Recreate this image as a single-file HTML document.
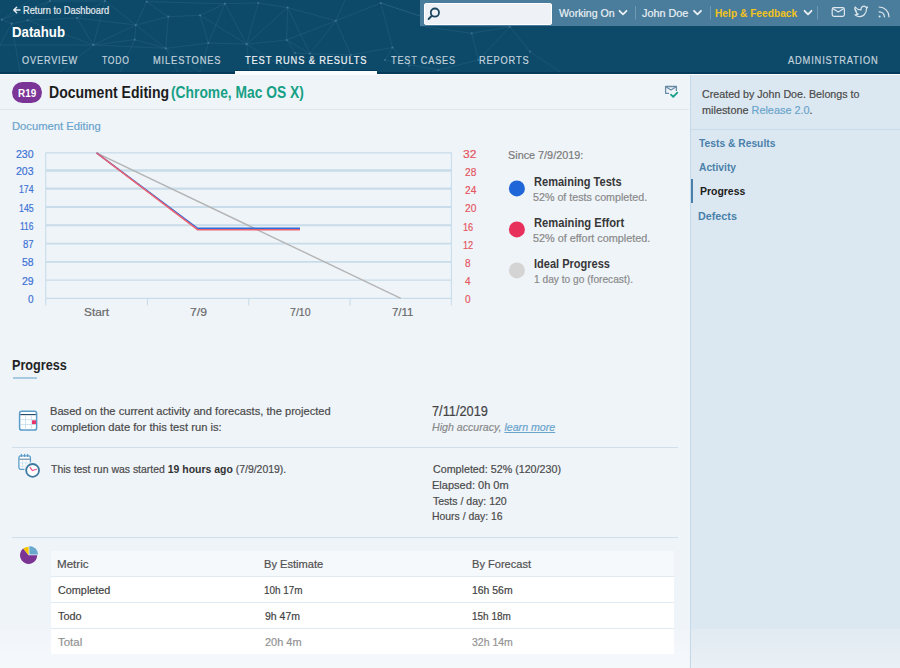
<!DOCTYPE html>
<html><head><meta charset="utf-8">
<style>
html,body{margin:0;padding:0;}
body{width:900px;height:668px;overflow:hidden;position:relative;background:#eff4f9;font-family:"Liberation Sans",sans-serif;}
.t{position:absolute;white-space:nowrap;line-height:1;}
.r{-webkit-text-stroke:0.2px currentColor;}
.abs{position:absolute;}
</style></head><body>
<!-- header -->
<div class="abs" style="left:0;top:0;width:900px;height:72px;background:#0d4a69;"></div>
<svg class="abs" style="left:0;top:0" width="900" height="72" viewBox="0 0 900 72">
 <path d="M1.7 19.7L50 1M1.7 19.7L11.7 23.7M11.7 23.7L27.5 20.3M27.5 20.3L77 18M77 18L105 1M77 18L93.3 45M105 1L93.3 45M93.3 45L135.8 25M105 1L135.8 25M135.8 25L146.7 1.7M93.3 45L134.7 39.7M135.8 25L134.7 39.7M134.7 39.7L165.8 48.3M146.7 1.7L168.3 16.7M168.3 16.7L200 15.3M200 15.3L225 3.7M168.3 16.7L165.8 48.3M200 15.3L208.3 43M225 3.7L208.3 43M225 3.7L246.7 44.2M258.3 3L246.7 44.2M246.7 44.2L287.5 7.5M246.7 44.2L286.7 40M165.8 48.3L208.3 43M208.3 43L246.7 44.2M200 15.3L246.7 44.2M287.5 7.5L335.8 20.8M335.8 20.8L380.8 3M335.8 20.8L286.7 40M335.8 20.8L310 53.7M335.8 20.8L350.8 55M380.8 3L392.5 47.5M392.5 47.5L409 65.8M392.5 47.5L350.8 55M385 60L392.5 47.5M286.7 40L295 53M287.5 7.5L286.7 40M287.5 7.5L310 53.7M471.7 33.3L510 26.7M510 26.7L530 51.7M510 26.7L478.3 60M471.7 33.3L478.3 60M438.3 70L478.3 60M420 26L471.7 33.3M450 26L510 26.7M0 45L11.7 23.7M0 45L93.3 45M93.3 45L60 72M134.7 39.7L120 72M165.8 48.3L200 72M350.8 55L340 72M385 60L438.3 70M530 51.7L560 72M11.7 23.7L20 72M27.5 20.3L93.3 45M50 1L105 1M146.7 1.7L225 3.7M258.3 3L287.5 7.5M380.8 3L450 26M310 53.7L350.8 55M135.8 25L168.3 16.7M135.8 25L165.8 48.3M165.8 48.3L178 72M246.7 44.2L290 72M225 3.7L258.3 3M345 0L335.8 20.8M380.8 3L420 16M295 53L310 53.7M286.7 40L310 53.7M246.7 44.2L250 72M208.3 43L200 72M1.7 19.7L30 0M27.5 20.3L50 1M77 18L135.8 25M93.3 45L165.8 48.3" stroke="#6a9cbb" stroke-opacity="0.2" stroke-width="0.7" fill="none"/>
 <g fill="#7aa6c2" fill-opacity="0.35"><circle cx="1.7" cy="19.7" r="1.1"/><circle cx="11.7" cy="23.7" r="1.1"/><circle cx="27.5" cy="20.3" r="1.1"/><circle cx="50" cy="1" r="1.1"/><circle cx="77" cy="18" r="1.1"/><circle cx="105" cy="1" r="1.1"/><circle cx="93.3" cy="45" r="1.1"/><circle cx="135.8" cy="25" r="1.1"/><circle cx="134.7" cy="39.7" r="1.1"/><circle cx="146.7" cy="1.7" r="1.1"/><circle cx="168.3" cy="16.7" r="1.1"/><circle cx="200" cy="15.3" r="1.1"/><circle cx="225" cy="3.7" r="1.1"/><circle cx="258.3" cy="3" r="1.1"/><circle cx="287.5" cy="7.5" r="1.1"/><circle cx="165.8" cy="48.3" r="1.1"/><circle cx="208.3" cy="43" r="1.1"/><circle cx="246.7" cy="44.2" r="1.1"/><circle cx="286.7" cy="40" r="1.1"/><circle cx="335.8" cy="20.8" r="1.1"/><circle cx="380.8" cy="3" r="1.1"/><circle cx="295" cy="53" r="1.1"/><circle cx="310" cy="53.7" r="1.1"/><circle cx="392.5" cy="47.5" r="1.1"/><circle cx="385" cy="60" r="1.1"/><circle cx="409" cy="65.8" r="1.1"/><circle cx="350.8" cy="55" r="1.1"/><circle cx="471.7" cy="33.3" r="1.1"/><circle cx="510" cy="26.7" r="1.1"/><circle cx="530" cy="51.7" r="1.1"/><circle cx="478.3" cy="60" r="1.1"/><circle cx="438.3" cy="70" r="1.1"/></g>
</svg>
<div class="abs" style="left:0;top:72px;width:900px;height:2px;background:#043b5b;"></div>
<div class="abs" style="left:0;top:74px;width:900px;height:1px;background:#fafcfe;"></div>
<div class="abs" style="left:235px;top:70px;width:142px;height:1px;background:#043b5b;"></div>
<div class="abs" style="left:235px;top:71px;width:142px;height:4px;background:#fafcfe;"></div>
<!-- top bar -->
<div class="abs" style="left:420px;top:0;width:480px;height:25.5px;background:#4a7d9c;"></div>
<div class="abs" style="left:423.5px;top:2.7px;width:126px;height:20px;background:#eef2f7;border:1px solid #ffffff;border-radius:2px;"></div>
<svg class="abs" style="left:0;top:0" width="900" height="30" viewBox="0 0 900 30">
 <g fill="none" stroke="#1c4660" stroke-width="1.8" stroke-linecap="round">
  <circle cx="434.9" cy="12.6" r="4.1"/><path d="M431.6 16 L428.6 19"/>
 </g>
 <g fill="none" stroke="#eaf0f4" stroke-width="1.8" stroke-linecap="round" stroke-linejoin="round">
  <path d="M619.5 10.8 L623 14.3 L626.5 10.8"/>
  <path d="M694 10.8 L697.5 14.3 L701 10.8"/>
  <path d="M804.5 10.8 L808 14.3 L811.5 10.8"/>
 </g>
 <g stroke="#6f98b3" stroke-width="1"><path d="M635.5 6 V19.5 M710.5 6 V19.5 M817.5 6 V19.5"/></g>
 <g fill="none" stroke="#dfe8ee" stroke-width="1.2" stroke-linecap="round" stroke-linejoin="round">
  <rect x="832.2" y="7.6" width="12.2" height="8.8" rx="1.8"/>
  <path d="M833.5 9 L838.3 12 L843.1 9"/>
  <path d="M855 14.8 C857 16.8 861.5 17.5 864 15 C866 13 866.6 10.5 866.5 8.6 L867.6 7 L866 7.3 C865 6.3 863.2 6 862 7 C861 7.8 860.8 9 861 10 C858.5 9.8 856.5 8.8 855.2 7 C854.5 8.8 855 10.5 856.5 11.6 L855.8 11.6 C856.2 13 857.2 13.8 858.3 14 C857.3 14.8 856.2 15 855 14.8 Z"/>
  <path d="M879.2 11.8 A5 5 0 0 1 884.4 16.8"/>
  <path d="M879.2 7 A9.8 9.8 0 0 1 889 16.8"/>
 </g>
 <circle cx="879.6" cy="16.4" r="1" fill="#dfe8ee"/>
 <path d="M13.8 10 L20 10 M16.6 7.2 L13.8 10 L16.6 12.8" fill="none" stroke="#e4ebf0" stroke-width="1.5" stroke-linecap="round" stroke-linejoin="round"/>
</svg>

<!-- sidebar -->
<div class="abs" style="left:690px;top:75px;width:210px;height:554px;background:#dce8f1;"></div>
<div class="abs" style="left:690px;top:629px;width:210px;height:39px;background:linear-gradient(#e2ebf2,#e9f0f6);"></div>
<div class="abs" style="left:689.5px;top:75px;width:1.5px;height:593px;background:#c5d9e8;"></div>
<div class="abs" style="left:690px;top:129px;width:210px;height:1px;background:#c9dbe8;"></div>
<div class="abs" style="left:690.5px;top:179px;width:2.5px;height:23.5px;background:#4a80aa;"></div>

<!-- title row -->
<div class="abs" style="left:12px;top:82px;width:30px;height:21px;border-radius:11px;background:#7a3597;"></div>
<div class="abs" style="left:0;top:109px;width:689px;height:1px;background:#dce7f0;"></div>
<svg class="abs" style="left:0;top:0" width="900" height="130" viewBox="0 0 900 130">
 <g fill="none" stroke="#6a8aa6" stroke-width="1.3" stroke-linejoin="round">
  <path d="M669 93.3 H665.6 V86.5 H676.4 V91"/>
  <path d="M665.8 86.8 L671 90 L676.2 86.8"/>
 </g>
 <path d="M671 94.6 L673.2 96.8 L677.3 92.6" fill="none" stroke="#16a085" stroke-width="1.8" stroke-linecap="round" stroke-linejoin="round"/>
</svg>

<!-- chart -->
<svg class="abs" style="left:0;top:0" width="690" height="330" viewBox="0 0 690 330">
 <g stroke="#c8dce9" stroke-width="1.3" fill="none">
  <path d="M46 152.80 H451.4 M46 169.89 H451.4 M46 188.25 H451.4 M46 206.61 H451.4 M46 224.97 H451.4 M46 243.33 H451.4 M46 261.68 H451.4 M46 280.04 H451.4 M46 298.40 H451.4 M46 171.00 H451.4 M46 189.20 H451.4 M46 207.40 H451.4 M46 225.60 H451.4 M46 243.80 H451.4 M46 262.00 H451.4 M46 280.20 H451.4"/>
 </g>
 <g stroke="#c8dce9" stroke-width="1.1" fill="none">
  <path d="M45.7 152.5 V305.5 M451.4 152.5 V305.5 M147.5 298.4 V305.5 M248.8 298.4 V305.5 M350.1 298.4 V305.5"/>
 </g>
 <path d="M96.5 152.8 L400.8 298.4" stroke="#b4b4b4" stroke-width="1.4" fill="none"/>
 <path d="M96.5 152.8 L197.6 228.3 L300 228.3" stroke="#2d6bd6" stroke-width="1.5" fill="none"/>
 <path d="M96.5 152.8 L197.6 229.7 L300 229.7" stroke="#ea6272" stroke-width="1.5" fill="none"/>
 <circle cx="516.9" cy="188.4" r="8" fill="#1f66d9"/>
 <circle cx="516.9" cy="229.4" r="8" fill="#e8305c"/>
 <circle cx="516.9" cy="270.4" r="8" fill="#d4d4d4"/>
</svg>

<!-- progress -->
<div class="abs" style="left:12.5px;top:377px;width:24px;height:2px;background:#a9c9e0;"></div>
<div class="abs" style="left:12px;top:447px;width:666px;height:1px;background:#cfe0ec;"></div>
<div class="abs" style="left:12px;top:537px;width:666px;height:1px;background:#cfe0ec;"></div>
<svg class="abs" style="left:0;top:400px" width="60" height="170" viewBox="0 400 60 170">
 <!-- calendar -->
 <rect x="19.6" y="411.3" width="17" height="18.8" rx="2.2" fill="#ffffff" stroke="#5a9cc8" stroke-width="1.5"/>
 <path d="M20.3 414.6 H35.9" stroke="#1f4560" stroke-width="1.1"/>
 <g stroke="#c4dcec" stroke-width="0.8"><path d="M25.5 415.2 V429.5 M31.3 415.2 V429.5 M20.3 419.6 H35.9 M20.3 424.5 H35.9"/></g>
 <rect x="32" y="420.3" width="4" height="3.8" fill="#e8336a"/>
 <!-- calendar clock -->
 <rect x="18.9" y="455.8" width="11.5" height="13.6" rx="1.8" fill="#ffffff" stroke="#5a9cc8" stroke-width="1.3"/>
 <g stroke="#5a9cc8" stroke-width="1.2" stroke-linecap="round"><path d="M21.4 454.3 V456.5 M24.6 454.3 V456.5 M27.7 454.3 V456.5"/></g>
 <path d="M19.5 459.2 H29.8" stroke="#3f6782" stroke-width="0.9"/>
 <g stroke="#c4dcec" stroke-width="0.7"><path d="M22.5 459.8 V469 M26.1 459.8 V469 M19.5 463 H29.8 M19.5 466.2 H29.8"/></g>
 <circle cx="32.6" cy="470.4" r="8.4" fill="#eef3f8"/>
 <circle cx="32.6" cy="470.4" r="6.4" fill="#ffffff" stroke="#3d7aa0" stroke-width="1.8"/>
 <path d="M30.1 467.4 L32.4 470.6 L36.5 469.3" fill="none" stroke="#e84a86" stroke-width="1.1" stroke-linecap="round" stroke-linejoin="round"/>
 <!-- pie -->
 <path d="M28.6 555.3 L37.2 555.3 A8.6 8.6 0 1 1 23.2 548.6 Z" fill="#7b3394"/>
 <path d="M28.6 555.3 L23.2 548.6 A8.6 8.6 0 0 1 28.6 546.7 Z" fill="#f5c400"/>
 <path d="M29.4 554.6 L29.4 545.9 A8.7 8.7 0 0 1 38.1 554.6 Z" fill="#6aa8cc"/>
</svg>

<!-- table -->
<div class="abs" style="left:50.5px;top:551px;width:623px;height:103px;background:#ffffff;"></div>
<div class="abs" style="left:50.5px;top:551px;width:623px;height:25px;background:#f6f9fc;"></div>
<div class="abs" style="left:50.5px;top:576px;width:623px;height:1px;background:#dfeaf3;"></div>
<div class="abs" style="left:50.5px;top:602px;width:623px;height:1px;background:#dfeaf3;"></div>
<div class="abs" style="left:50.5px;top:628px;width:623px;height:1px;background:#dfeaf3;"></div>

<div class="t r" id="t0" style="top:5.57px;font-size:10.2px;font-weight:400;color:#e4ebf0;left:22.82px;transform-origin:0 0;transform:scaleX(0.9115);">Return to Dashboard</div>
<div class="t" id="t1" style="top:23.88px;font-size:15.5px;font-weight:700;color:#ffffff;left:12.27px;transform-origin:0 0;transform:scaleX(0.8543);">Datahub</div>
<div class="t r" id="t2" style="top:54.89px;font-size:11px;font-weight:400;color:#c3d3de;letter-spacing:1px;left:22.18px;transform-origin:0 0;transform:scaleX(0.8340);">OVERVIEW</div>
<div class="t r" id="t3" style="top:54.89px;font-size:11px;font-weight:400;color:#c3d3de;letter-spacing:1px;left:102.18px;transform-origin:0 0;transform:scaleX(0.7795);">TODO</div>
<div class="t r" id="t4" style="top:54.89px;font-size:11px;font-weight:400;color:#c3d3de;letter-spacing:1px;left:153.09px;transform-origin:0 0;transform:scaleX(0.8472);">MILESTONES</div>
<div class="t r" id="t5" style="top:54.89px;font-size:11px;font-weight:400;color:#eef2f6;letter-spacing:1px;left:245.40px;transform-origin:0 0;transform:scaleX(0.8468);">TEST RUNS &amp; RESULTS</div>
<div class="t r" id="t6" style="top:54.89px;font-size:11px;font-weight:400;color:#c3d3de;letter-spacing:1px;left:391.40px;transform-origin:0 0;transform:scaleX(0.8293);">TEST CASES</div>
<div class="t r" id="t7" style="top:54.89px;font-size:11px;font-weight:400;color:#c3d3de;letter-spacing:1px;left:478.92px;transform-origin:0 0;transform:scaleX(0.8420);">REPORTS</div>
<div class="t r" id="t8" style="top:54.89px;font-size:11px;font-weight:400;color:#c3d3de;letter-spacing:1px;left:787.58px;transform-origin:0 0;transform:scaleX(0.8451);">ADMINISTRATION</div>
<div class="t r" id="t9" style="top:7.97px;font-size:11.5px;font-weight:400;color:#eaf0f4;left:559.40px;transform-origin:0 0;transform:scaleX(0.9200);">Working On</div>
<div class="t r" id="t10" style="top:7.97px;font-size:11.5px;font-weight:400;color:#eaf0f4;left:642.40px;transform-origin:0 0;transform:scaleX(0.9404);">John Doe</div>
<div class="t" id="t11" style="top:7.97px;font-size:11.5px;font-weight:700;color:#f2c31c;left:715.25px;transform-origin:0 0;transform:scaleX(0.8871);">Help &amp; Feedback</div>
<div class="t" id="t12" style="top:88.78px;font-size:10.3px;font-weight:700;color:#ffffff;left:17.94px;transform-origin:0 0;transform:scaleX(0.9604);">R19</div>
<div class="t" id="t13" style="top:84.53px;font-size:15.8px;font-weight:700;color:#1c1c1c;left:48.81px;transform-origin:0 0;transform:scaleX(0.8891);">Document Editing</div>
<div class="t" id="t14" style="top:84.53px;font-size:15.8px;font-weight:700;color:#16a085;left:170.86px;transform-origin:0 0;transform:scaleX(0.8748);">(Chrome, Mac OS X)</div>
<div class="t r" id="t15" style="top:121.49px;font-size:11px;font-weight:400;color:#6aa4cc;left:12.46px;transform-origin:0 0;transform:scaleX(1.0215);">Document Editing</div>
<div class="t r" id="t16" style="top:89.17px;font-size:11.5px;font-weight:400;color:#4a4a4a;left:702.40px;transform-origin:0 0;transform:scaleX(0.9294);">Created by John Doe. Belongs to</div>
<div class="t r" id="t17" style="top:105.07px;font-size:11.5px;font-weight:400;color:#4a4a4a;left:702.36px;transform-origin:0 0;transform:scaleX(0.9452);">milestone <span style="color:#6aa4cc">Release 2.0</span>.</div>
<div class="t" id="t18" style="top:137.77px;font-size:11.5px;font-weight:700;color:#4a80aa;left:698.79px;transform-origin:0 0;transform:scaleX(0.8941);">Tests &amp; Results</div>
<div class="t" id="t19" style="top:162.17px;font-size:11.5px;font-weight:700;color:#4a80aa;left:698.80px;transform-origin:0 0;transform:scaleX(0.8913);">Activity</div>
<div class="t" id="t20" style="top:185.97px;font-size:11.5px;font-weight:700;color:#1c1c1c;left:700.03px;transform-origin:0 0;transform:scaleX(0.9080);">Progress</div>
<div class="t" id="t21" style="top:210.67px;font-size:11.5px;font-weight:700;color:#4a80aa;left:697.79px;transform-origin:0 0;transform:scaleX(0.9374);">Defects</div>
<div class="t r" id="t22" style="top:149.11px;font-size:11.8px;font-weight:400;color:#3c72d4;left:16.01px;transform-origin:0 0;transform:scaleX(0.8952);">230</div>
<div class="t r" id="t23" style="top:149.11px;font-size:11.8px;font-weight:400;color:#e5555f;left:463.48px;transform-origin:0 0;transform:scaleX(1.0241);">32</div>
<div class="t r" id="t24" style="top:166.11px;font-size:11.8px;font-weight:400;color:#3c72d4;left:16.01px;transform-origin:0 0;transform:scaleX(0.8952);">203</div>
<div class="t r" id="t25" style="top:167.21px;font-size:11.8px;font-weight:400;color:#e5555f;left:464.58px;transform-origin:0 0;transform:scaleX(0.8605);">28</div>
<div class="t r" id="t26" style="top:184.37px;font-size:11.8px;font-weight:400;color:#3c72d4;left:18.69px;transform-origin:0 0;transform:scaleX(0.7415);">174</div>
<div class="t r" id="t27" style="top:185.31px;font-size:11.8px;font-weight:400;color:#e5555f;left:464.58px;transform-origin:0 0;transform:scaleX(0.8605);">24</div>
<div class="t r" id="t28" style="top:202.62px;font-size:11.8px;font-weight:400;color:#3c72d4;left:18.72px;transform-origin:0 0;transform:scaleX(0.7453);">145</div>
<div class="t r" id="t29" style="top:203.41px;font-size:11.8px;font-weight:400;color:#e5555f;left:464.58px;transform-origin:0 0;transform:scaleX(0.8605);">20</div>
<div class="t r" id="t30" style="top:220.88px;font-size:11.8px;font-weight:400;color:#3c72d4;left:20.24px;transform-origin:0 0;transform:scaleX(0.7199);">116</div>
<div class="t r" id="t31" style="top:221.51px;font-size:11.8px;font-weight:400;color:#e5555f;left:462.78px;transform-origin:0 0;transform:scaleX(0.7781);">16</div>
<div class="t r" id="t32" style="top:239.14px;font-size:11.8px;font-weight:400;color:#3c72d4;left:23.17px;transform-origin:0 0;transform:scaleX(0.8136);">87</div>
<div class="t r" id="t33" style="top:239.61px;font-size:11.8px;font-weight:400;color:#e5555f;left:462.78px;transform-origin:0 0;transform:scaleX(0.7781);">12</div>
<div class="t r" id="t34" style="top:257.40px;font-size:11.8px;font-weight:400;color:#3c72d4;left:22.22px;transform-origin:0 0;transform:scaleX(0.8876);">58</div>
<div class="t r" id="t35" style="top:257.71px;font-size:11.8px;font-weight:400;color:#e5555f;left:464.55px;transform-origin:0 0;transform:scaleX(0.8504);">8</div>
<div class="t r" id="t36" style="top:275.65px;font-size:11.8px;font-weight:400;color:#3c72d4;left:22.22px;transform-origin:0 0;transform:scaleX(0.8876);">29</div>
<div class="t r" id="t37" style="top:275.81px;font-size:11.8px;font-weight:400;color:#e5555f;left:464.55px;transform-origin:0 0;transform:scaleX(0.8504);">4</div>
<div class="t r" id="t38" style="top:293.91px;font-size:11.8px;font-weight:400;color:#3c72d4;left:28.02px;transform-origin:0 0;transform:scaleX(0.8504);">0</div>
<div class="t r" id="t39" style="top:293.91px;font-size:11.8px;font-weight:400;color:#e5555f;left:464.55px;transform-origin:0 0;transform:scaleX(0.8504);">0</div>
<div class="t r" id="t40" style="top:307.19px;font-size:11px;font-weight:400;color:#6a6a6a;left:83.56px;transform-origin:0 0;transform:scaleX(1.0766);">Start</div>
<div class="t r" id="t41" style="top:307.19px;font-size:11px;font-weight:400;color:#6a6a6a;left:189.87px;transform-origin:0 0;transform:scaleX(1.1046);">7/9</div>
<div class="t r" id="t42" style="top:307.19px;font-size:11px;font-weight:400;color:#6a6a6a;left:289.52px;transform-origin:0 0;transform:scaleX(0.9621);">7/10</div>
<div class="t r" id="t43" style="top:307.19px;font-size:11px;font-weight:400;color:#6a6a6a;left:391.61px;transform-origin:0 0;transform:scaleX(1.0420);">7/11</div>
<div class="t r" id="t44" style="top:150.09px;font-size:11px;font-weight:400;color:#7a7a7a;left:507.95px;transform-origin:0 0;transform:scaleX(0.9841);">Since 7/9/2019:</div>
<div class="t" id="t45" style="top:176.44px;font-size:12px;font-weight:700;color:#383838;left:533.99px;transform-origin:0 0;transform:scaleX(0.9211);">Remaining Tests</div>
<div class="t r" id="t46" style="top:192.21px;font-size:10.5px;font-weight:400;color:#8a8a8a;left:533.47px;transform-origin:0 0;transform:scaleX(1.0185);">52% of tests completed.</div>
<div class="t" id="t47" style="top:217.44px;font-size:12px;font-weight:700;color:#383838;left:533.98px;transform-origin:0 0;transform:scaleX(0.9326);">Remaining Effort</div>
<div class="t r" id="t48" style="top:233.21px;font-size:10.5px;font-weight:400;color:#8a8a8a;left:533.45px;transform-origin:0 0;transform:scaleX(1.0323);">52% of effort completed.</div>
<div class="t" id="t49" style="top:258.44px;font-size:12px;font-weight:700;color:#383838;left:534.01px;transform-origin:0 0;transform:scaleX(0.9176);">Ideal Progress</div>
<div class="t r" id="t50" style="top:274.21px;font-size:10.5px;font-weight:400;color:#8a8a8a;left:533.53px;transform-origin:0 0;transform:scaleX(0.9691);">1 day to go (forecast).</div>
<div class="t" id="t51" style="top:358.45px;font-size:14px;font-weight:700;color:#242424;left:12.22px;transform-origin:0 0;transform:scaleX(0.9042);">Progress</div>
<div class="t r" id="t52" style="top:405.97px;font-size:11.5px;font-weight:400;color:#4a4a4a;left:49.73px;transform-origin:0 0;transform:scaleX(0.9672);">Based on the current activity and forecasts, the projected</div>
<div class="t r" id="t53" style="top:421.77px;font-size:11.5px;font-weight:400;color:#4a4a4a;left:50.78px;transform-origin:0 0;transform:scaleX(0.9746);">completion date for this test run is:</div>
<div class="t r" id="t54" style="top:403.55px;font-size:14px;font-weight:400;color:#444444;left:431.81px;transform-origin:0 0;transform:scaleX(0.9133);">7/11/2019</div>
<div class="t r" id="t55" style="top:422.49px;font-size:11px;font-weight:400;color:#8a8a8a;font-style:italic;left:432.40px;transform-origin:0 0;transform:scaleX(0.9656);">High accuracy, <span style="color:#6aa4cc;text-decoration:underline">learn more</span></div>
<div class="t r" id="t56" style="top:464.17px;font-size:11.5px;font-weight:400;color:#4a4a4a;left:51.20px;transform-origin:0 0;transform:scaleX(0.9087);">This test run was started <b style="color:#333;-webkit-text-stroke:0">19 hours ago</b> (7/9/2019).</div>
<div class="t r" id="t57" style="top:464.07px;font-size:11.5px;font-weight:400;color:#4a4a4a;left:432.80px;transform-origin:0 0;transform:scaleX(0.9310);">Completed: 52% (120/230)</div>
<div class="t r" id="t58" style="top:479.87px;font-size:11.5px;font-weight:400;color:#4a4a4a;left:431.76px;transform-origin:0 0;transform:scaleX(0.9597);">Elapsed: 0h 0m</div>
<div class="t r" id="t59" style="top:495.67px;font-size:11.5px;font-weight:400;color:#4a4a4a;left:432.80px;transform-origin:0 0;transform:scaleX(0.9150);">Tests / day: 120</div>
<div class="t r" id="t60" style="top:511.47px;font-size:11.5px;font-weight:400;color:#4a4a4a;left:431.81px;transform-origin:0 0;transform:scaleX(0.9056);">Hours / day: 16</div>
<div class="t r" id="t61" style="top:558.77px;font-size:11.5px;font-weight:400;color:#505050;left:56.55px;transform-origin:0 0;transform:scaleX(1.0092);">Metric</div>
<div class="t r" id="t62" style="top:558.77px;font-size:11.5px;font-weight:400;color:#505050;left:263.73px;transform-origin:0 0;transform:scaleX(0.9636);">By Estimate</div>
<div class="t r" id="t63" style="top:558.77px;font-size:11.5px;font-weight:400;color:#505050;left:471.57px;transform-origin:0 0;transform:scaleX(0.9619);">By Forecast</div>
<div class="t r" id="t64" style="top:584.97px;font-size:11.5px;font-weight:400;color:#424242;left:57.61px;transform-origin:0 0;transform:scaleX(0.9417);">Completed</div>
<div class="t r" id="t65" style="top:584.97px;font-size:11.5px;font-weight:400;color:#424242;left:263.90px;transform-origin:0 0;transform:scaleX(0.8605);">10h 17m</div>
<div class="t r" id="t66" style="top:584.97px;font-size:11.5px;font-weight:400;color:#424242;left:471.61px;transform-origin:0 0;transform:scaleX(0.9065);">16h 56m</div>
<div class="t r" id="t67" style="top:611.17px;font-size:11.5px;font-weight:400;color:#424242;left:57.60px;transform-origin:0 0;transform:scaleX(0.9442);">Todo</div>
<div class="t r" id="t68" style="top:611.17px;font-size:11.5px;font-weight:400;color:#424242;left:264.80px;transform-origin:0 0;transform:scaleX(0.9121);">9h 47m</div>
<div class="t r" id="t69" style="top:611.17px;font-size:11.5px;font-weight:400;color:#424242;left:471.62px;transform-origin:0 0;transform:scaleX(0.8676);">15h 18m</div>
<div class="t r" id="t70" style="top:637.37px;font-size:11.5px;font-weight:400;color:#737373;left:57.61px;transform-origin:0 0;transform:scaleX(0.9958);">Total</div>
<div class="t r" id="t71" style="top:637.37px;font-size:11.5px;font-weight:400;color:#737373;left:264.79px;transform-origin:0 0;transform:scaleX(0.9542);">20h 4m</div>
<div class="t r" id="t72" style="top:637.37px;font-size:11.5px;font-weight:400;color:#737373;left:471.60px;transform-origin:0 0;transform:scaleX(0.9109);">32h 14m</div>
<div class="abs" style="left:0;top:629px;width:689px;height:39px;background:linear-gradient(rgba(255,255,255,0.12),rgba(255,255,255,0.4));"></div>
</body></html>
